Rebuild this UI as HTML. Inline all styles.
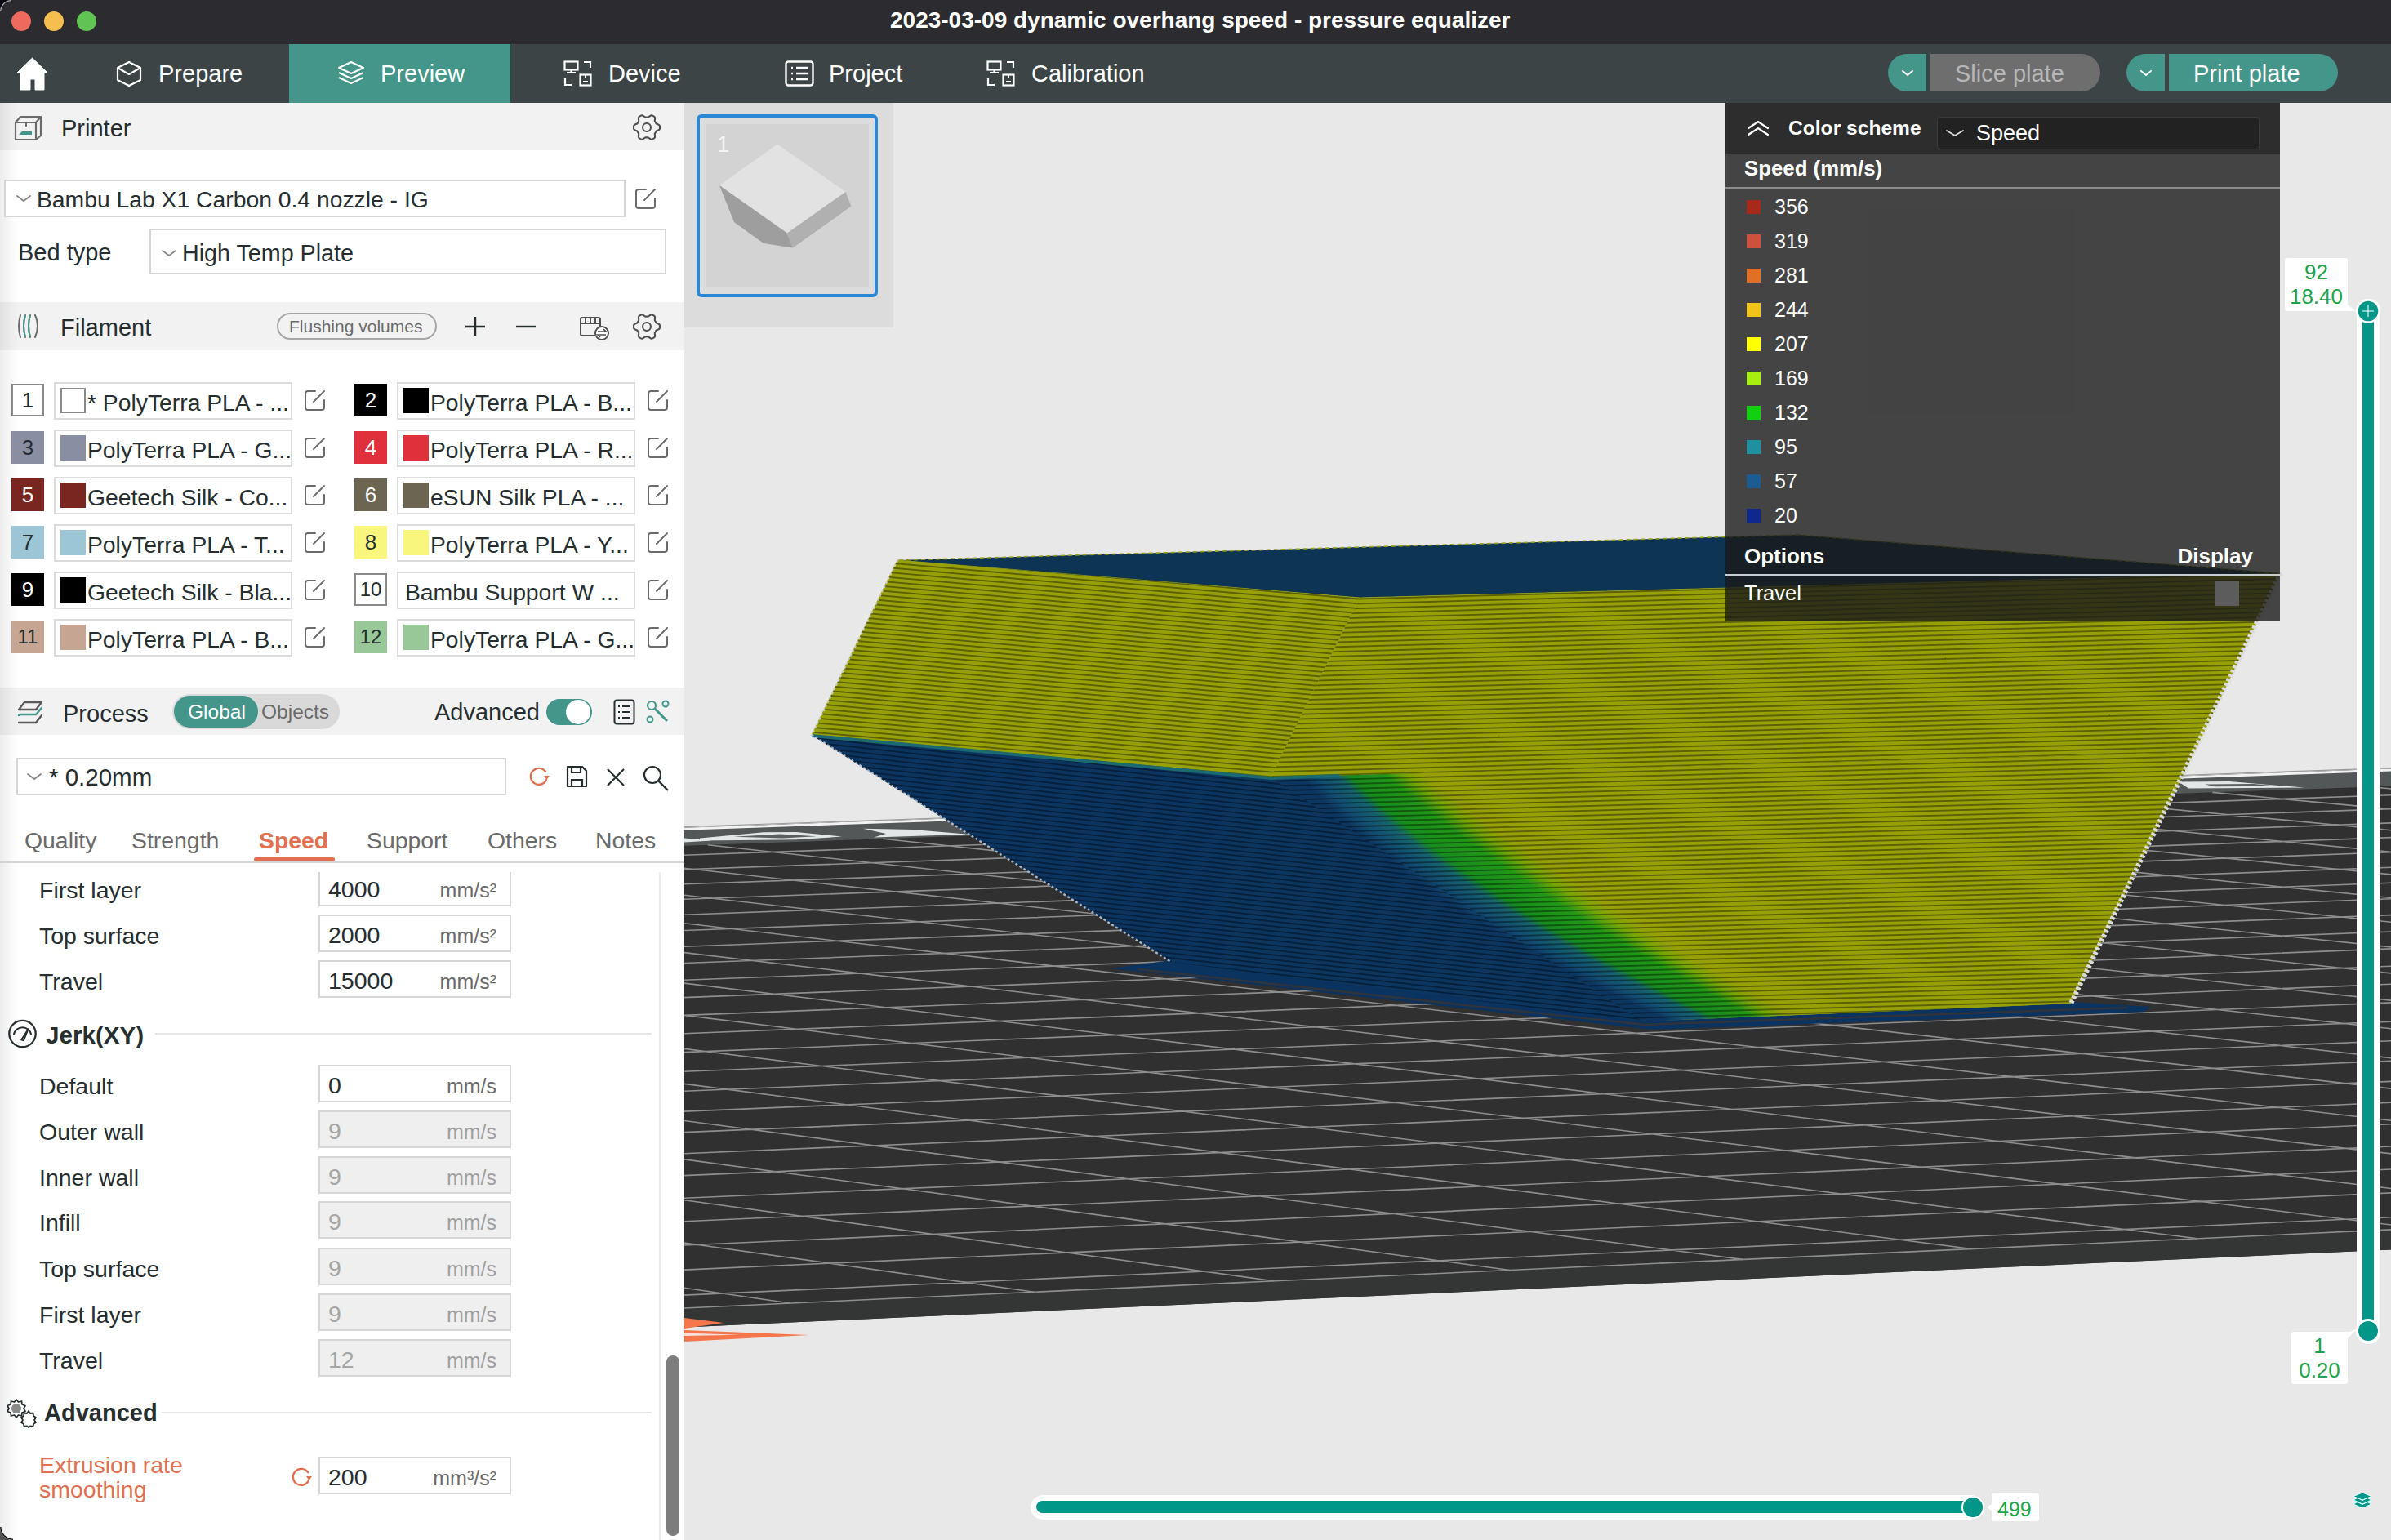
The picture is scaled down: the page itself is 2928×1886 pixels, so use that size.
<!DOCTYPE html>
<html><head><meta charset="utf-8"><title>Bambu Studio</title>
<style>
*{box-sizing:border-box;margin:0;padding:0}
html,body{width:2928px;height:1886px;overflow:hidden;background:#e8e8e8;font-family:"Liberation Sans",sans-serif}
.abs{position:absolute}
.t{position:absolute;white-space:nowrap}
svg.abs{overflow:visible}
</style></head><body>
<div class="abs" style="left:838px;top:126px;width:2090px;height:1760px;background:#e8e8e8"></div>
<svg width="2928" height="1886" style="position:absolute;left:0;top:0"><defs><pattern id="stUL" patternUnits="userSpaceOnUse" width="400" height="5.8" patternTransform="rotate(4.96633642658234)"><rect y="0" width="400" height="1.9" fill="rgba(0,0,0,0.4)"/></pattern><pattern id="stUR" patternUnits="userSpaceOnUse" width="400" height="5.8" patternTransform="rotate(-1.5467565200128726)"><rect y="0" width="400" height="1.9" fill="rgba(0,0,0,0.4)"/></pattern><pattern id="stLL" patternUnits="userSpaceOnUse" width="400" height="5.8" patternTransform="rotate(6.248443986875655)"><rect y="0" width="400" height="1.9" fill="rgba(0,0,0,0.4)"/></pattern><pattern id="stLR" patternUnits="userSpaceOnUse" width="400" height="5.8" patternTransform="rotate(-1.5467565200128726)"><rect y="0" width="400" height="1.9" fill="rgba(0,0,0,0.4)"/></pattern><linearGradient id="grLR" gradientUnits="userSpaceOnUse" x1="14.98" y1="-23.66" x2="73.83" y2="-116.61"><stop offset="0" stop-color="#0c3560"/><stop offset="0.16" stop-color="#104a70"/><stop offset="0.3" stop-color="#146478"/><stop offset="0.45" stop-color="#187a70"/><stop offset="0.52" stop-color="#1a9c1c"/><stop offset="0.8" stop-color="#28a414"/><stop offset="0.9" stop-color="#7caa04"/><stop offset="1" stop-color="#98a008"/></linearGradient><clipPath id="cpLR"><polygon points="994.0,900.0 1556.0,952.0 2687.0,921.0 2536.0,1229.0 2011.0,1251.0 1434.0,1178.0"/></clipPath><linearGradient id="gs0" gradientUnits="userSpaceOnUse" x1="1571.1" y1="921.2" x2="1641.1" y2="853.5"><stop offset="0" stop-color="#0c3560"/><stop offset="0.12" stop-color="#124c72"/><stop offset="0.3" stop-color="#16646e"/><stop offset="0.4" stop-color="#168c1e"/><stop offset="0.7" stop-color="#229816"/><stop offset="0.86" stop-color="#76a606"/><stop offset="1" stop-color="#98a008"/></linearGradient><linearGradient id="gs1" gradientUnits="userSpaceOnUse" x1="1580.1" y1="933.6" x2="1650.7" y2="862.6"><stop offset="0" stop-color="#0c3560"/><stop offset="0.12" stop-color="#124c72"/><stop offset="0.3" stop-color="#16646e"/><stop offset="0.4" stop-color="#168c1e"/><stop offset="0.7" stop-color="#229816"/><stop offset="0.86" stop-color="#76a606"/><stop offset="1" stop-color="#98a008"/></linearGradient><linearGradient id="gs2" gradientUnits="userSpaceOnUse" x1="1589.7" y1="946.0" x2="1660.6" y2="872.0"><stop offset="0" stop-color="#0c3560"/><stop offset="0.12" stop-color="#124c72"/><stop offset="0.3" stop-color="#16646e"/><stop offset="0.4" stop-color="#168c1e"/><stop offset="0.7" stop-color="#229816"/><stop offset="0.86" stop-color="#76a606"/><stop offset="1" stop-color="#98a008"/></linearGradient><linearGradient id="gs3" gradientUnits="userSpaceOnUse" x1="1600.1" y1="958.4" x2="1670.9" y2="881.7"><stop offset="0" stop-color="#0c3560"/><stop offset="0.12" stop-color="#124c72"/><stop offset="0.3" stop-color="#16646e"/><stop offset="0.4" stop-color="#168c1e"/><stop offset="0.7" stop-color="#229816"/><stop offset="0.86" stop-color="#76a606"/><stop offset="1" stop-color="#98a008"/></linearGradient><linearGradient id="gs4" gradientUnits="userSpaceOnUse" x1="1611.1" y1="970.8" x2="1681.6" y2="891.8"><stop offset="0" stop-color="#0c3560"/><stop offset="0.12" stop-color="#124c72"/><stop offset="0.3" stop-color="#16646e"/><stop offset="0.4" stop-color="#168c1e"/><stop offset="0.7" stop-color="#229816"/><stop offset="0.86" stop-color="#76a606"/><stop offset="1" stop-color="#98a008"/></linearGradient><linearGradient id="gs5" gradientUnits="userSpaceOnUse" x1="1622.8" y1="983.2" x2="1692.7" y2="902.1"><stop offset="0" stop-color="#0c3560"/><stop offset="0.12" stop-color="#124c72"/><stop offset="0.3" stop-color="#16646e"/><stop offset="0.4" stop-color="#168c1e"/><stop offset="0.7" stop-color="#229816"/><stop offset="0.86" stop-color="#76a606"/><stop offset="1" stop-color="#98a008"/></linearGradient><linearGradient id="gs6" gradientUnits="userSpaceOnUse" x1="1635.2" y1="995.6" x2="1704.4" y2="912.8"><stop offset="0" stop-color="#0c3560"/><stop offset="0.12" stop-color="#124c72"/><stop offset="0.3" stop-color="#16646e"/><stop offset="0.4" stop-color="#168c1e"/><stop offset="0.7" stop-color="#229816"/><stop offset="0.86" stop-color="#76a606"/><stop offset="1" stop-color="#98a008"/></linearGradient><linearGradient id="gs7" gradientUnits="userSpaceOnUse" x1="1648.3" y1="1007.9" x2="1716.5" y2="923.7"><stop offset="0" stop-color="#0c3560"/><stop offset="0.12" stop-color="#124c72"/><stop offset="0.3" stop-color="#16646e"/><stop offset="0.4" stop-color="#168c1e"/><stop offset="0.7" stop-color="#229816"/><stop offset="0.86" stop-color="#76a606"/><stop offset="1" stop-color="#98a008"/></linearGradient><linearGradient id="gs8" gradientUnits="userSpaceOnUse" x1="1662.1" y1="1020.3" x2="1729.1" y2="935.0"><stop offset="0" stop-color="#0c3560"/><stop offset="0.12" stop-color="#124c72"/><stop offset="0.3" stop-color="#16646e"/><stop offset="0.4" stop-color="#168c1e"/><stop offset="0.7" stop-color="#229816"/><stop offset="0.86" stop-color="#76a606"/><stop offset="1" stop-color="#98a008"/></linearGradient><linearGradient id="gs9" gradientUnits="userSpaceOnUse" x1="1676.6" y1="1032.7" x2="1742.3" y2="946.6"><stop offset="0" stop-color="#0c3560"/><stop offset="0.12" stop-color="#124c72"/><stop offset="0.3" stop-color="#16646e"/><stop offset="0.4" stop-color="#168c1e"/><stop offset="0.7" stop-color="#229816"/><stop offset="0.86" stop-color="#76a606"/><stop offset="1" stop-color="#98a008"/></linearGradient><linearGradient id="gs10" gradientUnits="userSpaceOnUse" x1="1691.8" y1="1045.1" x2="1756.0" y2="958.4"><stop offset="0" stop-color="#0c3560"/><stop offset="0.12" stop-color="#124c72"/><stop offset="0.3" stop-color="#16646e"/><stop offset="0.4" stop-color="#168c1e"/><stop offset="0.7" stop-color="#229816"/><stop offset="0.86" stop-color="#76a606"/><stop offset="1" stop-color="#98a008"/></linearGradient><linearGradient id="gs11" gradientUnits="userSpaceOnUse" x1="1707.6" y1="1057.5" x2="1770.3" y2="970.5"><stop offset="0" stop-color="#0c3560"/><stop offset="0.12" stop-color="#124c72"/><stop offset="0.3" stop-color="#16646e"/><stop offset="0.4" stop-color="#168c1e"/><stop offset="0.7" stop-color="#229816"/><stop offset="0.86" stop-color="#76a606"/><stop offset="1" stop-color="#98a008"/></linearGradient><linearGradient id="gs12" gradientUnits="userSpaceOnUse" x1="1724.2" y1="1069.9" x2="1785.3" y2="982.8"><stop offset="0" stop-color="#0c3560"/><stop offset="0.12" stop-color="#124c72"/><stop offset="0.3" stop-color="#16646e"/><stop offset="0.4" stop-color="#168c1e"/><stop offset="0.7" stop-color="#229816"/><stop offset="0.86" stop-color="#76a606"/><stop offset="1" stop-color="#98a008"/></linearGradient><linearGradient id="gs13" gradientUnits="userSpaceOnUse" x1="1741.5" y1="1082.3" x2="1800.8" y2="995.4"><stop offset="0" stop-color="#0c3560"/><stop offset="0.12" stop-color="#124c72"/><stop offset="0.3" stop-color="#16646e"/><stop offset="0.4" stop-color="#168c1e"/><stop offset="0.7" stop-color="#229816"/><stop offset="0.86" stop-color="#76a606"/><stop offset="1" stop-color="#98a008"/></linearGradient><linearGradient id="gs14" gradientUnits="userSpaceOnUse" x1="1759.4" y1="1094.7" x2="1816.9" y2="1008.2"><stop offset="0" stop-color="#0c3560"/><stop offset="0.12" stop-color="#124c72"/><stop offset="0.3" stop-color="#16646e"/><stop offset="0.4" stop-color="#168c1e"/><stop offset="0.7" stop-color="#229816"/><stop offset="0.86" stop-color="#76a606"/><stop offset="1" stop-color="#98a008"/></linearGradient><linearGradient id="gs15" gradientUnits="userSpaceOnUse" x1="1778.1" y1="1107.1" x2="1833.7" y2="1021.3"><stop offset="0" stop-color="#0c3560"/><stop offset="0.12" stop-color="#124c72"/><stop offset="0.3" stop-color="#16646e"/><stop offset="0.4" stop-color="#168c1e"/><stop offset="0.7" stop-color="#229816"/><stop offset="0.86" stop-color="#76a606"/><stop offset="1" stop-color="#98a008"/></linearGradient><linearGradient id="gs16" gradientUnits="userSpaceOnUse" x1="1797.4" y1="1119.5" x2="1851.2" y2="1034.5"><stop offset="0" stop-color="#0c3560"/><stop offset="0.12" stop-color="#124c72"/><stop offset="0.3" stop-color="#16646e"/><stop offset="0.4" stop-color="#168c1e"/><stop offset="0.7" stop-color="#229816"/><stop offset="0.86" stop-color="#76a606"/><stop offset="1" stop-color="#98a008"/></linearGradient><linearGradient id="gs17" gradientUnits="userSpaceOnUse" x1="1817.4" y1="1131.9" x2="1869.3" y2="1048.0"><stop offset="0" stop-color="#0c3560"/><stop offset="0.12" stop-color="#124c72"/><stop offset="0.3" stop-color="#16646e"/><stop offset="0.4" stop-color="#168c1e"/><stop offset="0.7" stop-color="#229816"/><stop offset="0.86" stop-color="#76a606"/><stop offset="1" stop-color="#98a008"/></linearGradient><linearGradient id="gs18" gradientUnits="userSpaceOnUse" x1="1838.2" y1="1144.3" x2="1888.0" y2="1061.7"><stop offset="0" stop-color="#0c3560"/><stop offset="0.12" stop-color="#124c72"/><stop offset="0.3" stop-color="#16646e"/><stop offset="0.4" stop-color="#168c1e"/><stop offset="0.7" stop-color="#229816"/><stop offset="0.86" stop-color="#76a606"/><stop offset="1" stop-color="#98a008"/></linearGradient><linearGradient id="gs19" gradientUnits="userSpaceOnUse" x1="1859.6" y1="1156.7" x2="1907.5" y2="1075.5"><stop offset="0" stop-color="#0c3560"/><stop offset="0.12" stop-color="#124c72"/><stop offset="0.3" stop-color="#16646e"/><stop offset="0.4" stop-color="#168c1e"/><stop offset="0.7" stop-color="#229816"/><stop offset="0.86" stop-color="#76a606"/><stop offset="1" stop-color="#98a008"/></linearGradient><linearGradient id="gs20" gradientUnits="userSpaceOnUse" x1="1881.7" y1="1169.1" x2="1927.6" y2="1089.6"><stop offset="0" stop-color="#0c3560"/><stop offset="0.12" stop-color="#124c72"/><stop offset="0.3" stop-color="#16646e"/><stop offset="0.4" stop-color="#168c1e"/><stop offset="0.7" stop-color="#229816"/><stop offset="0.86" stop-color="#76a606"/><stop offset="1" stop-color="#98a008"/></linearGradient><linearGradient id="gs21" gradientUnits="userSpaceOnUse" x1="1904.5" y1="1181.4" x2="1948.3" y2="1103.8"><stop offset="0" stop-color="#0c3560"/><stop offset="0.12" stop-color="#124c72"/><stop offset="0.3" stop-color="#16646e"/><stop offset="0.4" stop-color="#168c1e"/><stop offset="0.7" stop-color="#229816"/><stop offset="0.86" stop-color="#76a606"/><stop offset="1" stop-color="#98a008"/></linearGradient><linearGradient id="gs22" gradientUnits="userSpaceOnUse" x1="1928.0" y1="1193.8" x2="1969.8" y2="1118.1"><stop offset="0" stop-color="#0c3560"/><stop offset="0.12" stop-color="#124c72"/><stop offset="0.3" stop-color="#16646e"/><stop offset="0.4" stop-color="#168c1e"/><stop offset="0.7" stop-color="#229816"/><stop offset="0.86" stop-color="#76a606"/><stop offset="1" stop-color="#98a008"/></linearGradient><linearGradient id="gs23" gradientUnits="userSpaceOnUse" x1="1952.2" y1="1206.2" x2="1992.0" y2="1132.7"><stop offset="0" stop-color="#0c3560"/><stop offset="0.12" stop-color="#124c72"/><stop offset="0.3" stop-color="#16646e"/><stop offset="0.4" stop-color="#168c1e"/><stop offset="0.7" stop-color="#229816"/><stop offset="0.86" stop-color="#76a606"/><stop offset="1" stop-color="#98a008"/></linearGradient><linearGradient id="gs24" gradientUnits="userSpaceOnUse" x1="1977.1" y1="1218.6" x2="2014.9" y2="1147.3"><stop offset="0" stop-color="#0c3560"/><stop offset="0.12" stop-color="#124c72"/><stop offset="0.3" stop-color="#16646e"/><stop offset="0.4" stop-color="#168c1e"/><stop offset="0.7" stop-color="#229816"/><stop offset="0.86" stop-color="#76a606"/><stop offset="1" stop-color="#98a008"/></linearGradient><linearGradient id="gs25" gradientUnits="userSpaceOnUse" x1="2002.6" y1="1231.0" x2="2038.4" y2="1162.1"><stop offset="0" stop-color="#0c3560"/><stop offset="0.12" stop-color="#124c72"/><stop offset="0.3" stop-color="#16646e"/><stop offset="0.4" stop-color="#168c1e"/><stop offset="0.7" stop-color="#229816"/><stop offset="0.86" stop-color="#76a606"/><stop offset="1" stop-color="#98a008"/></linearGradient><linearGradient id="gs26" gradientUnits="userSpaceOnUse" x1="2028.9" y1="1243.4" x2="2062.7" y2="1177.1"><stop offset="0" stop-color="#0c3560"/><stop offset="0.12" stop-color="#124c72"/><stop offset="0.3" stop-color="#16646e"/><stop offset="0.4" stop-color="#168c1e"/><stop offset="0.7" stop-color="#229816"/><stop offset="0.86" stop-color="#76a606"/><stop offset="1" stop-color="#98a008"/></linearGradient><linearGradient id="gs27" gradientUnits="userSpaceOnUse" x1="2055.9" y1="1255.8" x2="2087.7" y2="1192.1"><stop offset="0" stop-color="#0c3560"/><stop offset="0.12" stop-color="#124c72"/><stop offset="0.3" stop-color="#16646e"/><stop offset="0.4" stop-color="#168c1e"/><stop offset="0.7" stop-color="#229816"/><stop offset="0.86" stop-color="#76a606"/><stop offset="1" stop-color="#98a008"/></linearGradient></defs><polygon points="838.0,1013.7 2928.0,941.6 2928.0,1530.4 838.0,1625.5" fill="#303030"/><polygon points="838.0,1602.0 2928.0,1505.9 2928.0,1530.4 838.0,1625.5" fill="#343636"/><polygon points="838.0,1013.7 2928.0,941.6 2928.0,962.7 838.0,1035.7" fill="#535757"/><path d="M838,1047.2L2928,973.7M838,1064.8L2928,990.6M838,1082.8L2928,1007.9M838,1101.3L2928,1025.6M838,1120.2L2928,1043.7M838,1139.5L2928,1062.2M838,1159.3L2928,1081.2M838,1179.5L2928,1100.7M838,1200.3L2928,1120.6M838,1221.6L2928,1141.0M838,1243.4L2928,1161.9M838,1265.7L2928,1183.3M838,1288.6L2928,1205.3M838,1312.2L2928,1227.9M838,1336.3L2928,1251.1M838,1361.1L2928,1274.8M838,1386.6L2928,1299.3M838,1412.7L2928,1324.4M838,1439.6L2928,1350.2M838,1467.3L2928,1376.7M838,1495.7L2928,1404.0M838,1525.0L2928,1432.0M838,1555.1L2928,1460.9M838,1586.1L2928,1490.7M2902.1,963.6L2928.0,966.0M2709.2,970.4L2928.0,990.9M2514.0,977.2L2928.0,1016.7M2316.5,984.1L2928.0,1043.3M2116.7,991.1L2928.0,1070.9M1914.6,998.1L2928.0,1099.5M1710.0,1005.3L2928.0,1129.2M1503.0,1012.5L2928.0,1159.9M1293.4,1019.8L2928.0,1191.9M1081.4,1027.2L2928.0,1225.1M866.7,1034.7L2928.0,1259.7M838.0,1063.3L2928.0,1295.6M838.0,1096.3L2928.0,1333.1M838.0,1130.7L2928.0,1372.2M838.0,1166.6L2928.0,1412.9M838.0,1204.1L2928.0,1455.5M838.0,1243.4L2928.0,1500.0M838.0,1284.4L2690.8,1516.8M838.0,1327.4L2414.4,1529.5M838.0,1372.5L2133.9,1542.4M838.0,1419.9L1849.0,1555.5M838.0,1469.7L1559.8,1568.8M838.0,1522.1L1266.1,1582.3M838.0,1577.3L967.8,1596.0" stroke="#8e8e8e" stroke-width="1.6" fill="none"/><path d="M838,1602.0L2928,1505.9" stroke="#8e8e8e" stroke-width="1.6"/><path d="M838,1015.2L2928,943.1" stroke="#f2f2f2" stroke-width="3"/><path d="M838,1012.7L2928,940.6" stroke="#9a9a9a" stroke-width="1.2"/><polygon points="838,1026.4 872,1029.5 838,1031.5" fill="#e2e6e6"/><polygon points="857,1026.6 935,1019.2 975,1019 1031,1024.6 975,1028.3 857,1029.6" fill="#e2e6e6"/><polygon points="898,1024.8 955,1021.6 1000,1024.2 958,1026.4" fill="#5a5e5e"/><polygon points="1057,1014.8 1118,1016 1186,1021.8 1070,1025.4 1085,1021" fill="#e2e6e6"/><polygon points="2668,957.5 2730,957 2822,964.5 2680,965.5" fill="#e2e6e6"/><polygon points="2700,960.5 2760,960 2790,962.8 2712,963.2" fill="#5a5e5e"/><path d="M838,1614 L886,1620 L838,1627Z" fill="#f4764a"/><path d="M838,1629 L990,1635 L838,1643Z" fill="#f4764a"/><path d="M838,1632.5 L905,1634.8 L838,1636Z" fill="#f6e2da"/><polygon points="1360.0,1186.0 1434.0,1176.0 2011.0,1249.0 2536.0,1227.0 2634.0,1233.0 2626.0,1239.0 2023.0,1261.0" fill="#0b3360"/><path d="M1393,1187 L2014,1255 L2605,1234" stroke="#30343a" stroke-width="2.5" fill="none"/><polygon points="1099.0,686.0 2202.0,655.0 2793.0,702.0 1665.0,732.0" fill="#0d3452"/><polygon points="1099.0,686.0 1665.0,732.0 1556.0,952.0 994.0,900.0" fill="#98a008" stroke="#98a008" stroke-width="0.8"/><polygon points="1099.0,686.0 1665.0,732.0 1556.0,952.0 994.0,900.0" fill="url(#stUL)"/><polygon points="1665.0,732.0 2793.0,702.0 2687.0,921.0 1556.0,952.0" fill="#98a008" stroke="#98a008" stroke-width="0.8"/><polygon points="1665.0,732.0 2793.0,702.0 2687.0,921.0 1556.0,952.0" fill="url(#stUR)"/><polygon points="994.0,900.0 1556.0,952.0 2011.0,1251.0 1434.0,1178.0" fill="#0c3460" stroke="#0c3460" stroke-width="0.8"/><polygon points="1556.0,952.0 2687.0,921.0 2536.0,1229.0 2011.0,1251.0" fill="#98a008"/><g clip-path="url(#cpLR)"><rect x="1500" y="914.5" width="1300" height="13.4" fill="url(#gs0)"/><rect x="1500" y="926.9" width="1300" height="13.4" fill="url(#gs1)"/><rect x="1500" y="939.3" width="1300" height="13.4" fill="url(#gs2)"/><rect x="1500" y="951.7" width="1300" height="13.4" fill="url(#gs3)"/><rect x="1500" y="964.1" width="1300" height="13.4" fill="url(#gs4)"/><rect x="1500" y="976.5" width="1300" height="13.4" fill="url(#gs5)"/><rect x="1500" y="988.9" width="1300" height="13.4" fill="url(#gs6)"/><rect x="1500" y="1001.2" width="1300" height="13.4" fill="url(#gs7)"/><rect x="1500" y="1013.6" width="1300" height="13.4" fill="url(#gs8)"/><rect x="1500" y="1026.0" width="1300" height="13.4" fill="url(#gs9)"/><rect x="1500" y="1038.4" width="1300" height="13.4" fill="url(#gs10)"/><rect x="1500" y="1050.8" width="1300" height="13.4" fill="url(#gs11)"/><rect x="1500" y="1063.2" width="1300" height="13.4" fill="url(#gs12)"/><rect x="1500" y="1075.6" width="1300" height="13.4" fill="url(#gs13)"/><rect x="1500" y="1088.0" width="1300" height="13.4" fill="url(#gs14)"/><rect x="1500" y="1100.4" width="1300" height="13.4" fill="url(#gs15)"/><rect x="1500" y="1112.8" width="1300" height="13.4" fill="url(#gs16)"/><rect x="1500" y="1125.2" width="1300" height="13.4" fill="url(#gs17)"/><rect x="1500" y="1137.6" width="1300" height="13.4" fill="url(#gs18)"/><rect x="1500" y="1150.0" width="1300" height="13.4" fill="url(#gs19)"/><rect x="1500" y="1162.4" width="1300" height="13.4" fill="url(#gs20)"/><rect x="1500" y="1174.8" width="1300" height="13.4" fill="url(#gs21)"/><rect x="1500" y="1187.1" width="1300" height="13.4" fill="url(#gs22)"/><rect x="1500" y="1199.5" width="1300" height="13.4" fill="url(#gs23)"/><rect x="1500" y="1211.9" width="1300" height="13.4" fill="url(#gs24)"/><rect x="1500" y="1224.3" width="1300" height="13.4" fill="url(#gs25)"/><rect x="1500" y="1236.7" width="1300" height="13.4" fill="url(#gs26)"/><rect x="1500" y="1249.1" width="1300" height="13.4" fill="url(#gs27)"/></g><polygon points="1556.0,952.0 2687.0,921.0 2536.0,1229.0 2011.0,1251.0" fill="url(#stLR)"/><polygon points="994.0,900.0 1556.0,952.0 2011.0,1251.0 1434.0,1178.0" fill="url(#stLL)"/><path d="M994,901 L1556,953 L1640,950" stroke="#1a6a70" stroke-width="4" fill="none"/><path d="M1101,686 L2202,655 L2789,702" stroke="#9aa014" stroke-width="1.6" stroke-dasharray="5 4" fill="none"/><path d="M1099,686 L994,900 L1434,1178" stroke="#d4d4d8" stroke-width="2.4" stroke-dasharray="3 2.8" fill="none" opacity="0.8"/><path d="M2793,702 L2536,1229" stroke="#dcdcdc" stroke-width="6" stroke-dasharray="3.5 2.5"/></svg>
<div class="abs" style="left:838px;top:126px;width:256px;height:275px;background:#dcdcdc"></div>
<div class="abs" style="left:853px;top:140px;width:222px;height:224px;border:4px solid #2b88d8;border-radius:6px"></div>
<div class="abs" style="left:864px;top:152px;width:200px;height:200px;background:#d3d3d3"></div>
<div class="t" style="left:878.0px;top:164.1px;font-size:27px;line-height:27px;color:#f4f4f4;">1</div>
<svg class="abs" style="left:838px;top:126px" width="256" height="275"><polygon points="43,101 114,50.5 197.5,109 126,159.5" fill="#e2e2e2"/><polygon points="43,101 126,159.5 133,177.5 97,172 61,146" fill="#9e9e9e"/><polygon points="126,159.5 197.5,109 204.5,126.5 133,177.5" fill="#b0b0b0"/></svg>
<div class="abs" style="left:2113px;top:126px;width:679px;height:62px;background:#2d2d2d"></div>
<div class="abs" style="left:2113px;top:188px;width:679px;height:573px;background:rgba(26,26,26,0.8)"></div>
<svg class="abs" style="left:2139px;top:147px;" width="28" height="20" viewBox="0 0 28 20" fill="none"><path d="M2 10 L14 2 L26 10 M2 18 L14 10 L26 18" stroke="#fff" stroke-width="2.2" stroke-linecap="round"/></svg>
<div class="t" style="left:2190.0px;top:145.1px;font-size:24.6px;line-height:24.6px;color:#ffffff;font-weight:bold;">Color scheme</div>
<div class="abs" style="left:2372px;top:143px;width:395px;height:40px;background:#222222;border:1px solid #3c3c3c;border-radius:4px"></div>
<svg class="abs" style="left:2382px;top:158px;" width="24" height="10" viewBox="0 0 24 10" fill="none"><path d="M2 2 L12 8 L22 2" stroke="#ddd" stroke-width="1.8" stroke-linecap="round"/></svg>
<div class="t" style="left:2420.0px;top:150.1px;font-size:27px;line-height:27px;color:#ffffff;">Speed</div>
<div class="t" style="left:2136.0px;top:194.1px;font-size:25.8px;line-height:25.8px;color:#ffffff;font-weight:bold;">Speed (mm/s)</div>
<div class="abs" style="left:2113px;top:229px;width:679px;height:2px;background:#8c8c8c"></div>
<div class="abs" style="left:2139px;top:244.5px;width:17px;height:17px;background:#a8281c"></div>
<div class="t" style="left:2173.0px;top:240.8px;font-size:25px;line-height:25px;color:#ffffff;">356</div>
<div class="abs" style="left:2139px;top:286.5px;width:17px;height:17px;background:#d05040"></div>
<div class="t" style="left:2173.0px;top:282.8px;font-size:25px;line-height:25px;color:#ffffff;">319</div>
<div class="abs" style="left:2139px;top:328.5px;width:17px;height:17px;background:#e07028"></div>
<div class="t" style="left:2173.0px;top:324.8px;font-size:25px;line-height:25px;color:#ffffff;">281</div>
<div class="abs" style="left:2139px;top:370.5px;width:17px;height:17px;background:#f0c418"></div>
<div class="t" style="left:2173.0px;top:366.8px;font-size:25px;line-height:25px;color:#ffffff;">244</div>
<div class="abs" style="left:2139px;top:412.5px;width:17px;height:17px;background:#ffff00"></div>
<div class="t" style="left:2173.0px;top:408.8px;font-size:25px;line-height:25px;color:#ffffff;">207</div>
<div class="abs" style="left:2139px;top:454.5px;width:17px;height:17px;background:#a8ee10"></div>
<div class="t" style="left:2173.0px;top:450.8px;font-size:25px;line-height:25px;color:#ffffff;">169</div>
<div class="abs" style="left:2139px;top:496.5px;width:17px;height:17px;background:#10d010"></div>
<div class="t" style="left:2173.0px;top:492.8px;font-size:25px;line-height:25px;color:#ffffff;">132</div>
<div class="abs" style="left:2139px;top:538.5px;width:17px;height:17px;background:#2090a0"></div>
<div class="t" style="left:2173.0px;top:534.8px;font-size:25px;line-height:25px;color:#ffffff;">95</div>
<div class="abs" style="left:2139px;top:580.5px;width:17px;height:17px;background:#1c5c90"></div>
<div class="t" style="left:2173.0px;top:576.8px;font-size:25px;line-height:25px;color:#ffffff;">57</div>
<div class="abs" style="left:2139px;top:622.5px;width:17px;height:17px;background:#10288c"></div>
<div class="t" style="left:2173.0px;top:618.8px;font-size:25px;line-height:25px;color:#ffffff;">20</div>
<div class="t" style="left:2136.0px;top:667.9px;font-size:26px;line-height:26px;color:#ffffff;font-weight:bold;">Options</div>
<div class="t" style="left:2600px;top:667.9px;width:159px;text-align:right;font-size:26px;line-height:26px;color:#fff;font-weight:bold">Display</div>
<div class="abs" style="left:2113px;top:703px;width:679px;height:2px;background:#c4ccd4"></div>
<div class="t" style="left:2136.0px;top:714.3px;font-size:25.5px;line-height:25.5px;color:#ffffff;">Travel</div>
<div class="abs" style="left:2712px;top:712px;width:30px;height:30px;background:#5c5c5c"></div>
<div class="abs" style="left:2886px;top:366px;width:29px;height:1280px;background:#ffffff;border-radius:14px"></div>
<div class="abs" style="left:2893px;top:381px;width:14px;height:1249px;background:#009688"></div>
<svg class="abs" style="left:2884px;top:365px;" width="32" height="32" viewBox="0 0 32 32" fill="none"><circle cx="16" cy="16" r="15" fill="#fff"/><circle cx="16" cy="16" r="12.3" fill="#009688"/><path d="M16 9 V23 M9 16 H23" stroke="#fff" stroke-width="1.1"/></svg>
<svg class="abs" style="left:2884px;top:1614px;" width="32" height="32" viewBox="0 0 32 32" fill="none"><circle cx="16" cy="16" r="15" fill="#fff"/><circle cx="16" cy="16" r="12" fill="#009688"/></svg>
<svg class="abs" style="left:2798px;top:316px;" width="96" height="70" viewBox="0 0 96 70" fill="none"><path d="M3 0 H74 Q77 0 77 3 V57 L87 65 H3 Q0 65 0 62 V3 Q0 0 3 0 Z" fill="#fff"/></svg>
<div class="t" style="left:2798px;top:319.9px;width:77px;text-align:center;font-size:26px;line-height:26px;color:#1ea44c">92</div>
<div class="t" style="left:2798px;top:349.9px;width:77px;text-align:center;font-size:26px;line-height:26px;color:#1ea44c">18.40</div>
<svg class="abs" style="left:2806px;top:1626px;" width="90" height="70" viewBox="0 0 90 70" fill="none"><path d="M0 8 Q0 5 3 5 H72 L82 0 L69 13 V66 Q69 69 66 69 H3 Q0 69 0 66 Z" fill="#fff"/></svg>
<div class="t" style="left:2806px;top:1634.9px;width:69px;text-align:center;font-size:26px;line-height:26px;color:#1ea44c">1</div>
<div class="t" style="left:2806px;top:1664.9px;width:69px;text-align:center;font-size:26px;line-height:26px;color:#1ea44c">0.20</div>
<div class="abs" style="left:1262px;top:1831px;width:1166px;height:30px;background:#fff;border-radius:15px"></div>
<div class="abs" style="left:1269px;top:1838px;width:1148px;height:15px;background:#009688;border-radius:8px"></div>
<svg class="abs" style="left:2401px;top:1831px;" width="30" height="30" viewBox="0 0 30 30" fill="none"><circle cx="15" cy="15" r="14" fill="#fff"/><circle cx="15" cy="15" r="12" fill="#009688"/></svg>
<svg class="abs" style="left:2431px;top:1829px;" width="66" height="34" viewBox="0 0 66 34" fill="none"><path d="M8 3 Q8 0 11 0 H63 Q66 0 66 3 V31 Q66 34 63 34 H11 Q8 34 8 31 V21 L2 17 L8 13 Z" fill="#fff"/></svg>
<div class="t" style="left:2446.0px;top:1835.8px;font-size:25px;line-height:25px;color:#1ea44c;">499</div>
<svg class="abs" style="left:2879px;top:1827px;" width="28" height="26" viewBox="0 0 28 26" fill="none"><path d="M14 20 L3 15 L8 12.5 L14 15.5 L20 12.5 L25 15 Z" fill="#009688" stroke="#dff" stroke-width="1"/><path d="M14 15 L3 10 L8 7.5 L14 10.5 L20 7.5 L25 10 Z" fill="#009688" stroke="#dff" stroke-width="1"/><path d="M14 10 L3 5.5 L14 1 L25 5.5 Z" fill="#009688" stroke="#dff" stroke-width="1"/></svg>
<div class="abs" style="left:0px;top:0px;width:2928px;height:54px;background:#2c2b30"></div>
<div class="abs" style="left:14px;top:14px;width:24px;height:24px;background:#ee6a5f;border-radius:50%"></div>
<div class="abs" style="left:54px;top:14px;width:24px;height:24px;background:#f5bf4f;border-radius:50%"></div>
<div class="abs" style="left:94px;top:14px;width:24px;height:24px;background:#61c354;border-radius:50%"></div>
<div class="t" style="left:1090.0px;top:11.2px;font-size:28px;line-height:28px;color:#ffffff;font-weight:bold;">2023-03-09 dynamic overhang speed - pressure equalizer</div>
<div class="abs" style="left:0px;top:54px;width:2928px;height:72px;background:#3c4446"></div>
<div class="abs" style="left:354px;top:54px;width:271px;height:72px;background:#44968a"></div>
<svg class="abs" style="left:20px;top:70px;" width="40" height="42" viewBox="0 0 40 42" fill="none"><path d="M19.5 1 L38 19 L34 19 L34 40 L23 40 L23 27 L17 27 L17 40 L5 40 L5 19 L1 19 Z" fill="#fff" stroke="#fff" stroke-width="1" stroke-linejoin="round"/></svg>
<svg class="abs" style="left:141px;top:74px;" width="34" height="33" viewBox="0 0 34 33" fill="none"><path d="M17 2 L31 9 L31 24 L17 31 L3 24 L3 9 Z M3 9 L17 17 L31 9" stroke="#fff" stroke-width="2.2" stroke-linejoin="round"/></svg>
<svg class="abs" style="left:412px;top:74px;" width="36" height="33" viewBox="0 0 36 33" fill="none"><path d="M18 2 L33 9 L18 16 L3 9 Z" stroke="#fff" stroke-width="2.2" stroke-linejoin="round"/><path d="M3 15 L18 22 L33 15 M3 21 L18 28 L33 21" stroke="#fff" stroke-width="2.2" stroke-linejoin="round"/></svg>
<svg class="abs" style="left:690px;top:74px;" width="36" height="32" viewBox="0 0 36 32" fill="none"><rect x="1.5" y="1.5" width="16" height="10" stroke="#fff" stroke-width="2.2"/><path d="M9.5 11.5 V15 M4 15 H15" stroke="#fff" stroke-width="2.2"/><path d="M25 2 H33 V9" stroke="#fff" stroke-width="2.2"/><path d="M2 22 V30 H10" stroke="#fff" stroke-width="2.2"/><rect x="20.5" y="17.5" width="13" height="13" stroke="#fff" stroke-width="2.2"/><path d="M27 17.5 V22 M24 26 H30" stroke="#fff" stroke-width="2"/></svg>
<svg class="abs" style="left:1208px;top:74px;" width="36" height="32" viewBox="0 0 36 32" fill="none"><rect x="1.5" y="1.5" width="16" height="10" stroke="#fff" stroke-width="2.2"/><path d="M9.5 11.5 V15 M4 15 H15" stroke="#fff" stroke-width="2.2"/><path d="M25 2 H33 V9" stroke="#fff" stroke-width="2.2"/><path d="M2 22 V30 H10" stroke="#fff" stroke-width="2.2"/><rect x="20.5" y="17.5" width="13" height="13" stroke="#fff" stroke-width="2.2"/><path d="M27 17.5 V22 M24 26 H30" stroke="#fff" stroke-width="2"/></svg>
<svg class="abs" style="left:961px;top:74px;" width="36" height="32" viewBox="0 0 36 32" fill="none"><rect x="1.5" y="1.5" width="33" height="29" rx="3" stroke="#fff" stroke-width="2.4"/><path d="M8 9 H10 M14 9 H28 M8 16 H10 M14 16 H28 M8 23 H10 M14 23 H28" stroke="#fff" stroke-width="2.4"/></svg>
<div class="t" style="left:194.0px;top:76.3px;font-size:29px;line-height:29px;color:#fff;">Prepare</div>
<div class="t" style="left:466.0px;top:76.3px;font-size:29px;line-height:29px;color:#fff;">Preview</div>
<div class="t" style="left:745.0px;top:76.3px;font-size:29px;line-height:29px;color:#fff;">Device</div>
<div class="t" style="left:1015.0px;top:76.3px;font-size:29px;line-height:29px;color:#fff;">Project</div>
<div class="t" style="left:1263.0px;top:76.3px;font-size:29px;line-height:29px;color:#fff;">Calibration</div>
<div class="abs" style="left:2312px;top:66px;width:47px;height:46px;background:#44968a;border-radius:23px 0 0 23px"></div>
<svg class="abs" style="left:2327px;top:84px;" width="18" height="11" viewBox="0 0 18 11" fill="none"><path d="M3 3 L9 8 L15 3" stroke="#fff" stroke-width="2" stroke-linecap="round"/></svg>
<div class="abs" style="left:2364px;top:66px;width:208px;height:46px;background:#6e6e6e;border-radius:0 23px 23px 0"></div>
<div class="t" style="left:2394.0px;top:76.3px;font-size:29px;line-height:29px;color:#b6b6b6;">Slice plate</div>
<div class="abs" style="left:2604px;top:66px;width:47px;height:46px;background:#44968a;border-radius:23px 0 0 23px"></div>
<svg class="abs" style="left:2619px;top:84px;" width="18" height="11" viewBox="0 0 18 11" fill="none"><path d="M3 3 L9 8 L15 3" stroke="#fff" stroke-width="2" stroke-linecap="round"/></svg>
<div class="abs" style="left:2656px;top:66px;width:207px;height:46px;background:#44968a;border-radius:0 23px 23px 0"></div>
<div class="t" style="left:2686.0px;top:76.3px;font-size:29px;line-height:29px;color:#ffffff;">Print plate</div>
<svg class="abs" style="left:0;top:0" width="16" height="16"><path d="M0 0 H14 A14 14 0 0 0 0 14 Z" fill="#0a0614"/><path d="M14 0.7 A13.3 13.3 0 0 0 0.7 14" stroke="#a8a8b0" stroke-width="1.2" fill="none"/></svg>
<div class="abs" style="left:0px;top:126px;width:838px;height:1760px;background:#ffffff"></div>
<div class="abs" style="left:0px;top:126px;width:838px;height:58px;background:#f2f2f2"></div>
<div class="abs" style="left:0px;top:370px;width:838px;height:59px;background:#f2f2f2"></div>
<div class="abs" style="left:0px;top:842px;width:838px;height:58px;background:#f2f2f2"></div>
<div class="abs" style="left:0px;top:126px;width:22px;height:1760px;background:linear-gradient(90deg,rgba(0,0,0,0.07),rgba(0,0,0,0))"></div>
<svg class="abs" style="left:17px;top:141px;" width="35" height="31" viewBox="0 0 35 31" fill="none"><path d="M2 9 L8 2 H33 V25 L27 30 H2 Z" stroke="#6b6b6b" stroke-width="2.2" stroke-linejoin="round"/><path d="M2 9 H27 V30 M27 9 L33 2" stroke="#6b6b6b" stroke-width="2.2"/><path d="M15 9 V14" stroke="#6b6b6b" stroke-width="2"/><path d="M6 24 L10 20 H22 V24 Z" fill="#44968a"/></svg>
<div class="t" style="left:75.0px;top:143.3px;font-size:29px;line-height:29px;color:#262e30;">Printer</div>
<svg class="abs" style="left:774px;top:138px;" width="36" height="36" viewBox="0 0 36 36" fill="none"><path d="M34.00 18.00 L33.97 19.05 L33.86 20.09 L33.01 20.99 L31.72 21.68 L30.40 22.21 L29.46 22.75 L29.12 23.48 L28.74 24.20 L28.31 24.89 L27.84 25.55 L27.85 26.64 L28.04 28.04 L28.09 29.50 L27.74 30.69 L26.89 31.30 L26.00 31.86 L25.08 32.35 L24.12 32.78 L22.92 32.49 L21.68 31.72 L20.56 30.85 L19.62 30.29 L18.81 30.37 L18.00 30.40 L17.19 30.37 L16.38 30.29 L15.44 30.85 L14.32 31.72 L13.08 32.49 L11.88 32.78 L10.92 32.35 L10.00 31.86 L9.11 31.30 L8.26 30.69 L7.91 29.50 L7.96 28.04 L8.15 26.64 L8.16 25.55 L7.69 24.89 L7.26 24.20 L6.88 23.48 L6.54 22.75 L5.60 22.21 L4.28 21.68 L2.99 20.99 L2.14 20.09 L2.03 19.05 L2.00 18.00 L2.03 16.95 L2.14 15.91 L2.99 15.01 L4.28 14.32 L5.60 13.79 L6.54 13.25 L6.88 12.52 L7.26 11.80 L7.69 11.11 L8.16 10.45 L8.15 9.36 L7.96 7.96 L7.91 6.50 L8.26 5.31 L9.11 4.70 L10.00 4.14 L10.92 3.65 L11.88 3.22 L13.08 3.51 L14.32 4.28 L15.44 5.15 L16.38 5.71 L17.19 5.63 L18.00 5.60 L18.81 5.63 L19.62 5.71 L20.56 5.15 L21.68 4.28 L22.92 3.51 L24.12 3.22 L25.08 3.65 L26.00 4.14 L26.89 4.70 L27.74 5.31 L28.09 6.50 L28.04 7.96 L27.85 9.36 L27.84 10.45 L28.31 11.11 L28.74 11.80 L29.12 12.52 L29.46 13.25 L30.40 13.79 L31.72 14.32 L33.01 15.01 L33.86 15.91 L33.97 16.95 L34.00 18.00Z" stroke="#505050" stroke-width="2.1" stroke-linejoin="round"/><circle cx="18" cy="18" r="5" stroke="#505050" stroke-width="2.1"/></svg>
<div class="abs" style="left:5px;top:220px;width:761px;height:46px;border:2px solid #d6d6d6;background:#fff"></div>
<svg class="abs" style="left:19px;top:238px;" width="20" height="10" viewBox="0 0 20 10" fill="none"><path d="M2 2 L10 8 L18 2" stroke="#888" stroke-width="1.8" stroke-linecap="round"/></svg>
<div class="t" style="left:45.0px;top:230.4px;font-size:28.3px;line-height:28.3px;color:#262e30;">Bambu Lab X1 Carbon 0.4 nozzle - IG</div>
<svg class="abs" style="left:777px;top:229px;" width="28" height="28" viewBox="0 0 28 28" fill="none"><path d="M14 3 H5 Q2 3 2 6 V23 Q2 26 5 26 H22 Q25 26 25 23 V14" stroke="#6b6b6b" stroke-width="2" stroke-linecap="round"/><path d="M12 16 L25 3" stroke="#6b6b6b" stroke-width="2" stroke-linecap="round"/></svg>
<div class="t" style="left:22.0px;top:295.4px;font-size:29px;line-height:29px;color:#262e30;">Bed type</div>
<div class="abs" style="left:183px;top:280px;width:633px;height:56px;border:2px solid #d6d6d6;background:#fff"></div>
<svg class="abs" style="left:197px;top:305px;" width="20" height="10" viewBox="0 0 20 10" fill="none"><path d="M2 2 L10 8 L18 2" stroke="#888" stroke-width="1.8" stroke-linecap="round"/></svg>
<div class="t" style="left:223.0px;top:295.6px;font-size:28.7px;line-height:28.7px;color:#262e30;">High Temp Plate</div>
<svg class="abs" style="left:20px;top:384px;" width="30" height="31" viewBox="0 0 30 31" fill="none"><path d="M5 2 Q1 15 5 29 M11 2 Q7 15 11 29 M17 2 Q13 15 17 29 M23 2 Q29 15 23 29" stroke="#6b6b6b" stroke-width="2" stroke-linecap="round"/><path d="M11 2 Q7 15 11 29 M17 2 Q13 15 17 29" stroke="#44968a" stroke-width="2"/></svg>
<div class="t" style="left:74.0px;top:387.4px;font-size:29px;line-height:29px;color:#262e30;">Filament</div>
<div class="abs" style="left:339px;top:383px;width:196px;height:33px;border:2.2px solid #a6a6a6;border-radius:17px;background:#f2f2f2"></div>
<div class="t" style="left:354.0px;top:389.1px;font-size:21px;line-height:21px;color:#6b6b6b;">Flushing volumes</div>
<svg class="abs" style="left:569px;top:387px;" width="26" height="26" viewBox="0 0 26 26" fill="none"><path d="M13 1 V25 M1 13 H25" stroke="#262e30" stroke-width="2.4"/></svg>
<svg class="abs" style="left:631px;top:387px;" width="26" height="26" viewBox="0 0 26 26" fill="none"><path d="M1 13 H25" stroke="#262e30" stroke-width="2.4"/></svg>
<svg class="abs" style="left:709px;top:384px;" width="38" height="33" viewBox="0 0 38 33" fill="none"><rect x="2" y="5" width="24" height="22" rx="2" stroke="#505050" stroke-width="2"/><path d="M2 12 H26 M8 5 V12 M14 5 V12 M20 5 V12" stroke="#505050" stroke-width="2"/><circle cx="28" cy="24" r="8" fill="#fff" stroke="#505050" stroke-width="2"/><path d="M23 22 H33 L30 19 M33 26 H23 L26 29" stroke="#505050" stroke-width="1.6"/></svg>
<svg class="abs" style="left:774px;top:382px;" width="36" height="36" viewBox="0 0 36 36" fill="none"><path d="M34.00 18.00 L33.97 19.05 L33.86 20.09 L33.01 20.99 L31.72 21.68 L30.40 22.21 L29.46 22.75 L29.12 23.48 L28.74 24.20 L28.31 24.89 L27.84 25.55 L27.85 26.64 L28.04 28.04 L28.09 29.50 L27.74 30.69 L26.89 31.30 L26.00 31.86 L25.08 32.35 L24.12 32.78 L22.92 32.49 L21.68 31.72 L20.56 30.85 L19.62 30.29 L18.81 30.37 L18.00 30.40 L17.19 30.37 L16.38 30.29 L15.44 30.85 L14.32 31.72 L13.08 32.49 L11.88 32.78 L10.92 32.35 L10.00 31.86 L9.11 31.30 L8.26 30.69 L7.91 29.50 L7.96 28.04 L8.15 26.64 L8.16 25.55 L7.69 24.89 L7.26 24.20 L6.88 23.48 L6.54 22.75 L5.60 22.21 L4.28 21.68 L2.99 20.99 L2.14 20.09 L2.03 19.05 L2.00 18.00 L2.03 16.95 L2.14 15.91 L2.99 15.01 L4.28 14.32 L5.60 13.79 L6.54 13.25 L6.88 12.52 L7.26 11.80 L7.69 11.11 L8.16 10.45 L8.15 9.36 L7.96 7.96 L7.91 6.50 L8.26 5.31 L9.11 4.70 L10.00 4.14 L10.92 3.65 L11.88 3.22 L13.08 3.51 L14.32 4.28 L15.44 5.15 L16.38 5.71 L17.19 5.63 L18.00 5.60 L18.81 5.63 L19.62 5.71 L20.56 5.15 L21.68 4.28 L22.92 3.51 L24.12 3.22 L25.08 3.65 L26.00 4.14 L26.89 4.70 L27.74 5.31 L28.09 6.50 L28.04 7.96 L27.85 9.36 L27.84 10.45 L28.31 11.11 L28.74 11.80 L29.12 12.52 L29.46 13.25 L30.40 13.79 L31.72 14.32 L33.01 15.01 L33.86 15.91 L33.97 16.95 L34.00 18.00Z" stroke="#505050" stroke-width="2.1" stroke-linejoin="round"/><circle cx="18" cy="18" r="5" stroke="#505050" stroke-width="2.1"/></svg>
<div class="abs" style="left:14px;top:470px;width:40px;height:40px;background:#ffffff;border:2px solid #8a8a8a;"></div>
<div class="t" style="left:14px;top:470px;width:40px;height:40px;line-height:40px;text-align:center;font-size:26px;color:#262e30">1</div>
<div class="abs" style="left:66px;top:468px;width:292px;height:46px;border:2px solid #dcdcdc;background:#fff"></div>
<div class="abs" style="left:74px;top:475px;width:31px;height:31px;background:#ffffff;border:2px solid #8a8a8a;"></div>
<div class="t" style="left:107.0px;top:478.9px;font-size:28.3px;line-height:28.3px;color:#262e30;">* PolyTerra PLA - ...</div>
<svg class="abs" style="left:372px;top:476px;" width="28" height="28" viewBox="0 0 28 28" fill="none"><path d="M14 3 H5 Q2 3 2 6 V23 Q2 26 5 26 H22 Q25 26 25 23 V14" stroke="#6b6b6b" stroke-width="2" stroke-linecap="round"/><path d="M12 16 L25 3" stroke="#6b6b6b" stroke-width="2" stroke-linecap="round"/></svg>
<div class="abs" style="left:434px;top:470px;width:40px;height:40px;background:#000000;"></div>
<div class="t" style="left:434px;top:470px;width:40px;height:40px;line-height:40px;text-align:center;font-size:26px;color:#ffffff">2</div>
<div class="abs" style="left:486px;top:468px;width:292px;height:46px;border:2px solid #dcdcdc;background:#fff"></div>
<div class="abs" style="left:494px;top:475px;width:31px;height:31px;background:#000000;"></div>
<div class="t" style="left:527.0px;top:478.9px;font-size:28.3px;line-height:28.3px;color:#262e30;">PolyTerra PLA - B...</div>
<svg class="abs" style="left:792px;top:476px;" width="28" height="28" viewBox="0 0 28 28" fill="none"><path d="M14 3 H5 Q2 3 2 6 V23 Q2 26 5 26 H22 Q25 26 25 23 V14" stroke="#6b6b6b" stroke-width="2" stroke-linecap="round"/><path d="M12 16 L25 3" stroke="#6b6b6b" stroke-width="2" stroke-linecap="round"/></svg>
<div class="abs" style="left:14px;top:528px;width:40px;height:40px;background:#8a8ea2;"></div>
<div class="t" style="left:14px;top:528px;width:40px;height:40px;line-height:40px;text-align:center;font-size:26px;color:#262e30">3</div>
<div class="abs" style="left:66px;top:526px;width:292px;height:46px;border:2px solid #dcdcdc;background:#fff"></div>
<div class="abs" style="left:74px;top:533px;width:31px;height:31px;background:#8a8ea2;"></div>
<div class="t" style="left:107.0px;top:536.9px;font-size:28.3px;line-height:28.3px;color:#262e30;">PolyTerra PLA - G...</div>
<svg class="abs" style="left:372px;top:534px;" width="28" height="28" viewBox="0 0 28 28" fill="none"><path d="M14 3 H5 Q2 3 2 6 V23 Q2 26 5 26 H22 Q25 26 25 23 V14" stroke="#6b6b6b" stroke-width="2" stroke-linecap="round"/><path d="M12 16 L25 3" stroke="#6b6b6b" stroke-width="2" stroke-linecap="round"/></svg>
<div class="abs" style="left:434px;top:528px;width:40px;height:40px;background:#e0303c;"></div>
<div class="t" style="left:434px;top:528px;width:40px;height:40px;line-height:40px;text-align:center;font-size:26px;color:#ffffff">4</div>
<div class="abs" style="left:486px;top:526px;width:292px;height:46px;border:2px solid #dcdcdc;background:#fff"></div>
<div class="abs" style="left:494px;top:533px;width:31px;height:31px;background:#e0303c;"></div>
<div class="t" style="left:527.0px;top:536.9px;font-size:28.3px;line-height:28.3px;color:#262e30;">PolyTerra PLA - R...</div>
<svg class="abs" style="left:792px;top:534px;" width="28" height="28" viewBox="0 0 28 28" fill="none"><path d="M14 3 H5 Q2 3 2 6 V23 Q2 26 5 26 H22 Q25 26 25 23 V14" stroke="#6b6b6b" stroke-width="2" stroke-linecap="round"/><path d="M12 16 L25 3" stroke="#6b6b6b" stroke-width="2" stroke-linecap="round"/></svg>
<div class="abs" style="left:14px;top:586px;width:40px;height:40px;background:#7a2620;"></div>
<div class="t" style="left:14px;top:586px;width:40px;height:40px;line-height:40px;text-align:center;font-size:26px;color:#ffffff">5</div>
<div class="abs" style="left:66px;top:584px;width:292px;height:46px;border:2px solid #dcdcdc;background:#fff"></div>
<div class="abs" style="left:74px;top:591px;width:31px;height:31px;background:#7a2620;"></div>
<div class="t" style="left:107.0px;top:594.9px;font-size:28.3px;line-height:28.3px;color:#262e30;">Geetech Silk - Co...</div>
<svg class="abs" style="left:372px;top:592px;" width="28" height="28" viewBox="0 0 28 28" fill="none"><path d="M14 3 H5 Q2 3 2 6 V23 Q2 26 5 26 H22 Q25 26 25 23 V14" stroke="#6b6b6b" stroke-width="2" stroke-linecap="round"/><path d="M12 16 L25 3" stroke="#6b6b6b" stroke-width="2" stroke-linecap="round"/></svg>
<div class="abs" style="left:434px;top:586px;width:40px;height:40px;background:#6b6552;"></div>
<div class="t" style="left:434px;top:586px;width:40px;height:40px;line-height:40px;text-align:center;font-size:26px;color:#ffffff">6</div>
<div class="abs" style="left:486px;top:584px;width:292px;height:46px;border:2px solid #dcdcdc;background:#fff"></div>
<div class="abs" style="left:494px;top:591px;width:31px;height:31px;background:#6b6552;"></div>
<div class="t" style="left:527.0px;top:594.9px;font-size:28.3px;line-height:28.3px;color:#262e30;">eSUN Silk PLA - ...</div>
<svg class="abs" style="left:792px;top:592px;" width="28" height="28" viewBox="0 0 28 28" fill="none"><path d="M14 3 H5 Q2 3 2 6 V23 Q2 26 5 26 H22 Q25 26 25 23 V14" stroke="#6b6b6b" stroke-width="2" stroke-linecap="round"/><path d="M12 16 L25 3" stroke="#6b6b6b" stroke-width="2" stroke-linecap="round"/></svg>
<div class="abs" style="left:14px;top:644px;width:40px;height:40px;background:#9cc6d6;"></div>
<div class="t" style="left:14px;top:644px;width:40px;height:40px;line-height:40px;text-align:center;font-size:26px;color:#262e30">7</div>
<div class="abs" style="left:66px;top:642px;width:292px;height:46px;border:2px solid #dcdcdc;background:#fff"></div>
<div class="abs" style="left:74px;top:649px;width:31px;height:31px;background:#9cc6d6;"></div>
<div class="t" style="left:107.0px;top:652.9px;font-size:28.3px;line-height:28.3px;color:#262e30;">PolyTerra PLA - T...</div>
<svg class="abs" style="left:372px;top:650px;" width="28" height="28" viewBox="0 0 28 28" fill="none"><path d="M14 3 H5 Q2 3 2 6 V23 Q2 26 5 26 H22 Q25 26 25 23 V14" stroke="#6b6b6b" stroke-width="2" stroke-linecap="round"/><path d="M12 16 L25 3" stroke="#6b6b6b" stroke-width="2" stroke-linecap="round"/></svg>
<div class="abs" style="left:434px;top:644px;width:40px;height:40px;background:#f8f67c;"></div>
<div class="t" style="left:434px;top:644px;width:40px;height:40px;line-height:40px;text-align:center;font-size:26px;color:#262e30">8</div>
<div class="abs" style="left:486px;top:642px;width:292px;height:46px;border:2px solid #dcdcdc;background:#fff"></div>
<div class="abs" style="left:494px;top:649px;width:31px;height:31px;background:#f8f67c;"></div>
<div class="t" style="left:527.0px;top:652.9px;font-size:28.3px;line-height:28.3px;color:#262e30;">PolyTerra PLA - Y...</div>
<svg class="abs" style="left:792px;top:650px;" width="28" height="28" viewBox="0 0 28 28" fill="none"><path d="M14 3 H5 Q2 3 2 6 V23 Q2 26 5 26 H22 Q25 26 25 23 V14" stroke="#6b6b6b" stroke-width="2" stroke-linecap="round"/><path d="M12 16 L25 3" stroke="#6b6b6b" stroke-width="2" stroke-linecap="round"/></svg>
<div class="abs" style="left:14px;top:702px;width:40px;height:40px;background:#000000;"></div>
<div class="t" style="left:14px;top:702px;width:40px;height:40px;line-height:40px;text-align:center;font-size:26px;color:#ffffff">9</div>
<div class="abs" style="left:66px;top:700px;width:292px;height:46px;border:2px solid #dcdcdc;background:#fff"></div>
<div class="abs" style="left:74px;top:707px;width:31px;height:31px;background:#000000;"></div>
<div class="t" style="left:107.0px;top:710.9px;font-size:28.3px;line-height:28.3px;color:#262e30;">Geetech Silk - Bla...</div>
<svg class="abs" style="left:372px;top:708px;" width="28" height="28" viewBox="0 0 28 28" fill="none"><path d="M14 3 H5 Q2 3 2 6 V23 Q2 26 5 26 H22 Q25 26 25 23 V14" stroke="#6b6b6b" stroke-width="2" stroke-linecap="round"/><path d="M12 16 L25 3" stroke="#6b6b6b" stroke-width="2" stroke-linecap="round"/></svg>
<div class="abs" style="left:434px;top:702px;width:40px;height:40px;background:#ffffff;border:2px solid #8a8a8a;"></div>
<div class="t" style="left:434px;top:702px;width:40px;height:40px;line-height:40px;text-align:center;font-size:24px;color:#262e30">10</div>
<div class="abs" style="left:486px;top:700px;width:292px;height:46px;border:2px solid #dcdcdc;background:#fff"></div>
<div class="t" style="left:496.0px;top:710.9px;font-size:28.3px;line-height:28.3px;color:#262e30;">Bambu Support W ...</div>
<svg class="abs" style="left:792px;top:708px;" width="28" height="28" viewBox="0 0 28 28" fill="none"><path d="M14 3 H5 Q2 3 2 6 V23 Q2 26 5 26 H22 Q25 26 25 23 V14" stroke="#6b6b6b" stroke-width="2" stroke-linecap="round"/><path d="M12 16 L25 3" stroke="#6b6b6b" stroke-width="2" stroke-linecap="round"/></svg>
<div class="abs" style="left:14px;top:760px;width:40px;height:40px;background:#c6a692;"></div>
<div class="t" style="left:14px;top:760px;width:40px;height:40px;line-height:40px;text-align:center;font-size:24px;color:#262e30">11</div>
<div class="abs" style="left:66px;top:758px;width:292px;height:46px;border:2px solid #dcdcdc;background:#fff"></div>
<div class="abs" style="left:74px;top:765px;width:31px;height:31px;background:#c6a692;"></div>
<div class="t" style="left:107.0px;top:768.9px;font-size:28.3px;line-height:28.3px;color:#262e30;">PolyTerra PLA - B...</div>
<svg class="abs" style="left:372px;top:766px;" width="28" height="28" viewBox="0 0 28 28" fill="none"><path d="M14 3 H5 Q2 3 2 6 V23 Q2 26 5 26 H22 Q25 26 25 23 V14" stroke="#6b6b6b" stroke-width="2" stroke-linecap="round"/><path d="M12 16 L25 3" stroke="#6b6b6b" stroke-width="2" stroke-linecap="round"/></svg>
<div class="abs" style="left:434px;top:760px;width:40px;height:40px;background:#98c898;"></div>
<div class="t" style="left:434px;top:760px;width:40px;height:40px;line-height:40px;text-align:center;font-size:24px;color:#262e30">12</div>
<div class="abs" style="left:486px;top:758px;width:292px;height:46px;border:2px solid #dcdcdc;background:#fff"></div>
<div class="abs" style="left:494px;top:765px;width:31px;height:31px;background:#98c898;"></div>
<div class="t" style="left:527.0px;top:768.9px;font-size:28.3px;line-height:28.3px;color:#262e30;">PolyTerra PLA - G...</div>
<svg class="abs" style="left:792px;top:766px;" width="28" height="28" viewBox="0 0 28 28" fill="none"><path d="M14 3 H5 Q2 3 2 6 V23 Q2 26 5 26 H22 Q25 26 25 23 V14" stroke="#6b6b6b" stroke-width="2" stroke-linecap="round"/><path d="M12 16 L25 3" stroke="#6b6b6b" stroke-width="2" stroke-linecap="round"/></svg>
<svg class="abs" style="left:20px;top:858px;" width="34" height="30" viewBox="0 0 34 30" fill="none"><path d="M3 11 L10 2 H31 L24 11 Z" stroke="#5a5a5a" stroke-width="2.4" stroke-linejoin="round"/><path d="M3 18 Q3 17 5 17 H24 L31 9" stroke="#44968a" stroke-width="2.4" stroke-linecap="round"/><path d="M3 27 H24 L31 18" stroke="#5a5a5a" stroke-width="2.4" stroke-linecap="round"/></svg>
<div class="t" style="left:77.0px;top:860.4px;font-size:29px;line-height:29px;color:#262e30;">Process</div>
<div class="abs" style="left:211px;top:850px;width:205px;height:43px;background:#d9d9d9;border-radius:22px"></div>
<div class="abs" style="left:213px;top:852px;width:103px;height:39px;background:#44968a;border-radius:20px"></div>
<div class="t" style="left:230.0px;top:860.2px;font-size:24.5px;line-height:24.5px;color:#ffffff;">Global</div>
<div class="t" style="left:320.0px;top:860.2px;font-size:24.5px;line-height:24.5px;color:#6b6b6b;">Objects</div>
<div class="t" style="left:532.0px;top:858.4px;font-size:29px;line-height:29px;color:#262e30;">Advanced</div>
<div class="abs" style="left:669px;top:856px;width:56px;height:32px;background:#44968a;border-radius:16px"></div>
<div class="abs" style="left:693px;top:857px;width:30px;height:30px;background:#ffffff;border-radius:50%"></div>
<svg class="abs" style="left:751px;top:856px;" width="27" height="32" viewBox="0 0 27 32" fill="none"><rect x="1.5" y="1.5" width="24" height="29" rx="3" stroke="#262e30" stroke-width="2"/><path d="M6 9 H8 M11 9 H21 M6 16 H8 M11 16 H21 M6 23 H8 M11 23 H21" stroke="#262e30" stroke-width="2"/></svg>
<svg class="abs" style="left:790px;top:855px;" width="32" height="32" viewBox="0 0 32 32" fill="none"><circle cx="8" cy="9" r="5" stroke="#44968a" stroke-width="2.2"/><circle cx="25" cy="7" r="3.5" stroke="#44968a" stroke-width="2"/><circle cx="6" cy="26" r="3.5" stroke="#44968a" stroke-width="2"/><path d="M12 13 L27 28" stroke="#44968a" stroke-width="3"/></svg>
<div class="abs" style="left:20px;top:928px;width:600px;height:46px;border:2px solid #d6d6d6;background:#fff"></div>
<svg class="abs" style="left:32px;top:946px;" width="22" height="10" viewBox="0 0 22 10" fill="none"><path d="M2 2 L10 8 L18 2" stroke="#888" stroke-width="1.8" stroke-linecap="round"/></svg>
<div class="t" style="left:60.0px;top:936.9px;font-size:29.5px;line-height:29.5px;color:#262e30;">* 0.20mm</div>
<svg class="abs" style="left:644px;top:936px;" width="30" height="30" viewBox="0 0 30 30" fill="none"><path d="M24 9 A10 10 0 1 0 25 19" stroke="#e07050" stroke-width="2.4" stroke-linecap="round"/><path d="M22 14 H29 L25.5 19 Z" fill="#e07050"/></svg>
<svg class="abs" style="left:692px;top:936px;" width="28" height="30" viewBox="0 0 28 30" fill="none"><path d="M3 3 H21 L26 8 V27 H3 Z" stroke="#262e30" stroke-width="2.2" stroke-linejoin="round"/><path d="M8 3 V10 H19 V3 M8 27 V19 H21 V27" stroke="#262e30" stroke-width="2.2"/></svg>
<svg class="abs" style="left:742px;top:940px;" width="24" height="24" viewBox="0 0 24 24" fill="none"><path d="M2 2 L22 22 M22 2 L2 22" stroke="#262e30" stroke-width="2.2"/></svg>
<svg class="abs" style="left:786px;top:936px;" width="34" height="34" viewBox="0 0 34 34" fill="none"><circle cx="13" cy="13" r="10" stroke="#262e30" stroke-width="2.2"/><path d="M20.5 20.5 L32 32" stroke="#262e30" stroke-width="2.4"/></svg>
<div class="t" style="left:30.0px;top:1014.9px;font-size:28.4px;line-height:28.4px;color:#6b6b6b;">Quality</div>
<div class="t" style="left:161.0px;top:1014.9px;font-size:28.4px;line-height:28.4px;color:#6b6b6b;">Strength</div>
<div class="t" style="left:317.0px;top:1014.9px;font-size:28.4px;line-height:28.4px;color:#e07050;font-weight:bold;">Speed</div>
<div class="t" style="left:449.0px;top:1014.9px;font-size:28.4px;line-height:28.4px;color:#6b6b6b;">Support</div>
<div class="t" style="left:597.0px;top:1014.9px;font-size:28.4px;line-height:28.4px;color:#6b6b6b;">Others</div>
<div class="t" style="left:729.0px;top:1014.9px;font-size:28.4px;line-height:28.4px;color:#6b6b6b;">Notes</div>
<div class="abs" style="left:0px;top:1055px;width:838px;height:2px;background:#d4d4d4"></div>
<div class="abs" style="left:311px;top:1050px;width:99px;height:5px;background:#e07050;border-radius:3px"></div>
<div class="abs" style="left:0;top:1068px;width:838px;height:818px;overflow:hidden"><div class="abs" style="left:0;top:-1068px;width:838px;height:1886px"><div class="t" style="left:48.0px;top:1075.8px;font-size:28.5px;line-height:28.5px;color:#262e30;">First layer</div>
<div class="abs" style="left:390px;top:1064px;width:236px;height:46px;border:2px solid #d6d6d6;background:#ffffff"></div>
<div class="t" style="left:402.0px;top:1074.8px;font-size:28.5px;line-height:28.5px;color:#262e30;">4000</div>
<div class="t" style="left:480px;top:1077.8px;width:128px;text-align:right;font-size:25px;line-height:25px;color:#6b6b6b">mm/s&#178;</div>
<div class="t" style="left:48.0px;top:1131.8px;font-size:28.5px;line-height:28.5px;color:#262e30;">Top surface</div>
<div class="abs" style="left:390px;top:1120px;width:236px;height:46px;border:2px solid #d6d6d6;background:#ffffff"></div>
<div class="t" style="left:402.0px;top:1130.8px;font-size:28.5px;line-height:28.5px;color:#262e30;">2000</div>
<div class="t" style="left:480px;top:1133.8px;width:128px;text-align:right;font-size:25px;line-height:25px;color:#6b6b6b">mm/s&#178;</div>
<div class="t" style="left:48.0px;top:1187.8px;font-size:28.5px;line-height:28.5px;color:#262e30;">Travel</div>
<div class="abs" style="left:390px;top:1176px;width:236px;height:46px;border:2px solid #d6d6d6;background:#ffffff"></div>
<div class="t" style="left:402.0px;top:1186.8px;font-size:28.5px;line-height:28.5px;color:#262e30;">15000</div>
<div class="t" style="left:480px;top:1189.8px;width:128px;text-align:right;font-size:25px;line-height:25px;color:#6b6b6b">mm/s&#178;</div>
<svg class="abs" style="left:10px;top:1249px;" width="36" height="36" viewBox="0 0 36 36" fill="none"><circle cx="17.5" cy="17" r="16.2" stroke="#262e30" stroke-width="2.3"/><path d="M7 17.5 A10.8 10.8 0 0 1 28 17.5" stroke="#262e30" stroke-width="2.1" stroke-linecap="round"/><path d="M16 24.5 L24.5 11.5 L19 25.5 Z" fill="#999" stroke="#262e30" stroke-width="1.8" stroke-linejoin="round"/></svg>
<div class="t" style="left:56.0px;top:1252.8px;font-size:29.6px;line-height:29.6px;color:#262e30;font-weight:bold;">Jerk(XY)</div>
<div class="abs" style="left:190px;top:1265px;width:608px;height:2px;background:#e6e6e6"></div>
<div class="t" style="left:48.0px;top:1315.8px;font-size:28.5px;line-height:28.5px;color:#262e30;">Default</div>
<div class="abs" style="left:390px;top:1304px;width:236px;height:46px;border:2px solid #d6d6d6;background:#ffffff"></div>
<div class="t" style="left:402.0px;top:1314.8px;font-size:28.5px;line-height:28.5px;color:#262e30;">0</div>
<div class="t" style="left:480px;top:1317.8px;width:128px;text-align:right;font-size:25px;line-height:25px;color:#6b6b6b">mm/s</div>
<div class="t" style="left:48.0px;top:1371.8px;font-size:28.5px;line-height:28.5px;color:#262e30;">Outer wall</div>
<div class="abs" style="left:390px;top:1360px;width:236px;height:46px;border:2px solid #d6d6d6;background:#efefef"></div>
<div class="t" style="left:402.0px;top:1370.8px;font-size:28.5px;line-height:28.5px;color:#a6a6a6;">9</div>
<div class="t" style="left:480px;top:1373.8px;width:128px;text-align:right;font-size:25px;line-height:25px;color:#a0a0a0">mm/s</div>
<div class="t" style="left:48.0px;top:1427.8px;font-size:28.5px;line-height:28.5px;color:#262e30;">Inner wall</div>
<div class="abs" style="left:390px;top:1416px;width:236px;height:46px;border:2px solid #d6d6d6;background:#efefef"></div>
<div class="t" style="left:402.0px;top:1426.8px;font-size:28.5px;line-height:28.5px;color:#a6a6a6;">9</div>
<div class="t" style="left:480px;top:1429.8px;width:128px;text-align:right;font-size:25px;line-height:25px;color:#a0a0a0">mm/s</div>
<div class="t" style="left:48.0px;top:1482.8px;font-size:28.5px;line-height:28.5px;color:#262e30;">Infill</div>
<div class="abs" style="left:390px;top:1471px;width:236px;height:46px;border:2px solid #d6d6d6;background:#efefef"></div>
<div class="t" style="left:402.0px;top:1481.8px;font-size:28.5px;line-height:28.5px;color:#a6a6a6;">9</div>
<div class="t" style="left:480px;top:1484.8px;width:128px;text-align:right;font-size:25px;line-height:25px;color:#a0a0a0">mm/s</div>
<div class="t" style="left:48.0px;top:1539.8px;font-size:28.5px;line-height:28.5px;color:#262e30;">Top surface</div>
<div class="abs" style="left:390px;top:1528px;width:236px;height:46px;border:2px solid #d6d6d6;background:#efefef"></div>
<div class="t" style="left:402.0px;top:1538.8px;font-size:28.5px;line-height:28.5px;color:#a6a6a6;">9</div>
<div class="t" style="left:480px;top:1541.8px;width:128px;text-align:right;font-size:25px;line-height:25px;color:#a0a0a0">mm/s</div>
<div class="t" style="left:48.0px;top:1595.8px;font-size:28.5px;line-height:28.5px;color:#262e30;">First layer</div>
<div class="abs" style="left:390px;top:1584px;width:236px;height:46px;border:2px solid #d6d6d6;background:#efefef"></div>
<div class="t" style="left:402.0px;top:1594.8px;font-size:28.5px;line-height:28.5px;color:#a6a6a6;">9</div>
<div class="t" style="left:480px;top:1597.8px;width:128px;text-align:right;font-size:25px;line-height:25px;color:#a0a0a0">mm/s</div>
<div class="t" style="left:48.0px;top:1651.8px;font-size:28.5px;line-height:28.5px;color:#262e30;">Travel</div>
<div class="abs" style="left:390px;top:1640px;width:236px;height:46px;border:2px solid #d6d6d6;background:#efefef"></div>
<div class="t" style="left:402.0px;top:1650.8px;font-size:28.5px;line-height:28.5px;color:#a6a6a6;">12</div>
<div class="t" style="left:480px;top:1653.8px;width:128px;text-align:right;font-size:25px;line-height:25px;color:#a0a0a0">mm/s</div>
<svg class="abs" style="left:8px;top:1712px;" width="38" height="36" viewBox="0 0 38 36" fill="none"><circle cx="12" cy="13" r="6" fill="#8a8a8a"/><path d="M12 2 L14.5 5 L18.5 4 L19 8 L23 9.5 L21 13 L23 16.5 L19 18 L18.5 22 L14.5 21 L12 24 L9.5 21 L5.5 22 L5 18 L1 16.5 L3 13 L1 9.5 L5 8 L5.5 4 L9.5 5 Z" stroke="#262e30" stroke-width="1.8" stroke-linejoin="round"/><path d="M27 16 L29 19 L32.5 18.5 L33 22 L36 24 L34 27 L36 30 L33 32 L32.5 35 L29 34.5 L27 36 L25 34.5 L21.5 35 L21 32 L18 30 L20 27 L18 24 L21 22 L21.5 18.5 L25 19 Z" fill="#fff" stroke="#262e30" stroke-width="1.8" stroke-linejoin="round"/></svg>
<div class="t" style="left:54.0px;top:1716.3px;font-size:29px;line-height:29px;color:#262e30;font-weight:bold;">Advanced</div>
<div class="abs" style="left:198px;top:1729px;width:600px;height:2px;background:#e6e6e6"></div>
<div class="t" style="left:48.0px;top:1779.8px;font-size:28.5px;line-height:28.5px;color:#e07050;">Extrusion rate</div>
<div class="t" style="left:48.0px;top:1809.8px;font-size:28.5px;line-height:28.5px;color:#e07050;">smoothing</div>
<svg class="abs" style="left:353px;top:1794px;" width="30" height="30" viewBox="0 0 30 30" fill="none"><path d="M24 9 A10 10 0 1 0 25 19" stroke="#e07050" stroke-width="2.4" stroke-linecap="round"/><path d="M22 14 H29 L25.5 19 Z" fill="#e07050"/></svg>
<div class="abs" style="left:390px;top:1784px;width:236px;height:46px;border:2px solid #d6d6d6;background:#ffffff"></div>
<div class="t" style="left:402.0px;top:1794.8px;font-size:28.5px;line-height:28.5px;color:#262e30;">200</div>
<div class="t" style="left:480px;top:1797.8px;width:128px;text-align:right;font-size:25px;line-height:25px;color:#6b6b6b">mm&#179;/s&#178;</div>
</div></div>
<div class="abs" style="left:807px;top:1068px;width:2px;height:818px;background:#ececec"></div>
<div class="abs" style="left:816px;top:1660px;width:16px;height:221px;background:#7d7d7d;border-radius:8px"></div>
<svg class="abs" style="left:0;top:1870px" width="16" height="16"><path d="M0 16 H16 A16 16 0 0 1 0 0 Z" fill="#555"/><path d="M0.8 0 A15.2 15.2 0 0 0 16 15.2" stroke="#111" stroke-width="1.4" fill="none"/></svg>
</body></html>
